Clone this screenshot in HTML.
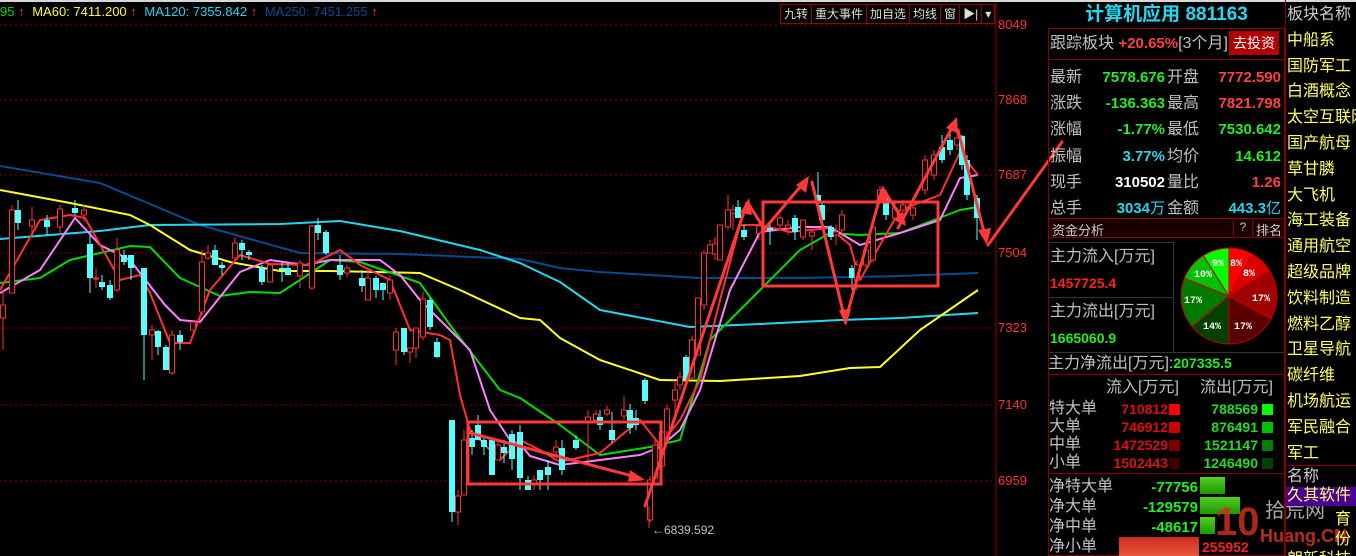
<!DOCTYPE html>
<html><head><meta charset="utf-8"><style>
*{margin:0;padding:0;box-sizing:border-box}
html,body{width:1356px;height:556px;overflow:hidden}
body{background:#000;position:relative;font-family:"Liberation Sans","Noto Sans CJK SC",sans-serif;color:#c0c0c0}
.a{position:absolute;white-space:nowrap}
.cn{font-family:"Liberation Sans","Noto Sans CJK SC",sans-serif;font-size:16px;line-height:18px}
.num{font-family:"Liberation Sans",sans-serif;font-weight:bold;font-size:15px;line-height:18px}
</style></head><body>
<div class="a" style="left:0;top:0;width:1356px;height:2px;background:#d8d8d8"></div>
<svg class="a" style="left:0;top:0" width="1356" height="556" xmlns="http://www.w3.org/2000/svg">
<g stroke="#8a0000" stroke-dasharray="2,3" stroke-width="1">
<line x1="0" y1="25" x2="995" y2="25"/><line x1="0" y1="100" x2="995" y2="100"/><line x1="0" y1="175" x2="995" y2="175"/><line x1="0" y1="253" x2="995" y2="253"/><line x1="0" y1="328" x2="995" y2="328"/><line x1="0" y1="405" x2="995" y2="405"/><line x1="0" y1="481" x2="995" y2="481"/>
</g>
<line x1="996" y1="2" x2="996" y2="556" stroke="#a00000"/>
<g fill="none" stroke-width="2" stroke-linejoin="round">
<polyline stroke="#0a4a90" points="0,166 100,183 200,225 300,253 400,254 520,259 560,268 600,272 700,278 800,278 900,276 978,273"/>
<polyline stroke="#22d8f0" points="0,239 100,231 150,225 280,224 340,221 400,231 480,250 520,263 560,282 600,310 690,327 760,324 840,320 900,318 978,313"/>
<polyline stroke="#ffff22" points="0,190 70,203 130,215 150,225 190,250 230,262 280,271 330,271 420,273 460,290 520,318 540,320 560,338 600,360 660,380 720,381 800,376 850,368 880,367 920,330 978,290"/>
<polyline stroke="#00dd00" points="0,283 40,278 70,260 100,253 130,246 150,247 180,278 220,296 250,292 280,293 300,280 330,260 360,262 420,283 450,325 500,390 520,398 560,425 600,455 650,447 680,440 710,340 760,290 800,250 830,233 860,235 900,233 960,210 978,207"/>
<polyline stroke="#ff80ff" points="0,293 40,270 75,218 100,245 130,260 165,305 180,320 200,322 240,272 270,260 305,265 330,260 380,260 400,275 420,300 445,325 470,350 490,410 510,440 520,444 530,456 560,465 600,460 640,455 660,447 680,430 700,390 730,290 760,232 800,227 830,227 860,245 900,233 940,220 960,178 978,175"/>
<polyline stroke="#ff3030" points="0,290 40,220 70,215 85,218 120,280 140,275 150,293 170,343 190,343 210,290 240,255 270,264 310,265 340,250 360,265 390,280 410,330 440,335 450,340 460,395 470,430 480,440 500,460 520,440 540,450 560,462 600,453 640,420 660,445 680,420 700,380 720,300 740,225 760,225 790,232 830,228 850,245 860,280 880,245 900,210 940,195 960,152 978,175"/>
</g>
<g id="cd"></g>
<g stroke="#ff3838" fill="none" stroke-width="3">
<rect x="468" y="422" width="193" height="62"/>
<rect x="763" y="202" width="175" height="84"/>
</g>
<g stroke="#ff3838" fill="none" stroke-width="3" stroke-linecap="round">
<line x1="470" y1="433" x2="640" y2="478"/>
<line x1="645" y1="506" x2="747" y2="203"/>
<polyline points="748,203 765,230"/>
<line x1="762" y1="232" x2="806" y2="180"/>
<line x1="812" y1="182" x2="845" y2="320"/>
<line x1="845" y1="322" x2="882" y2="190"/>
<line x1="884" y1="190" x2="904" y2="222"/>
<line x1="898" y1="228" x2="955" y2="122"/>
<line x1="958" y1="130" x2="986" y2="240"/>
<line x1="988" y1="245" x2="1062" y2="142"/>
</g>
<g fill="#ff3838">
<polygon points="645,480 630,470 628,482"/>
<polygon points="749,198 740,213 752,215"/>
<polygon points="809,176 796,185 806,193"/>
<polygon points="846,326 839,310 851,309"/>
<polygon points="883,185 876,201 888,201"/>
<polygon points="906,226 894,220 902,212"/>
<polygon points="957,117 946,128 957,133"/>
<polygon points="987,245 978,230 991,228"/>
</g>
<line x1="649" y1="506" x2="649" y2="528" stroke="#ff3030"/>
<text x="652" y="534" fill="#c0c0c0" font-family="Liberation Sans" font-size="12">←6839.592</text>
<g fill="#ff3030" font-family="Liberation Sans" font-size="13">
<text x="998" y="29">8049</text><text x="998" y="104">7868</text><text x="998" y="179">7687</text><text x="998" y="257">7504</text><text x="998" y="332">7323</text><text x="998" y="409">7140</text><text x="998" y="485">6959</text>
</g>
<g stroke="#c00000" stroke-width="1">
<path d="M1229,296 L1229,248 A48,48 0 0 1 1252.1,253.9Z" fill="#ff0000"/>
<path d="M1229,296 L1252.1,253.9 A48,48 0 0 1 1269.5,270.3Z" fill="#dd0000"/>
<path d="M1229,296 L1269.5,270.3 A48,48 0 0 1 1271,319.1Z" fill="#a00000"/>
<path d="M1229,296 L1271,319.1 A48,48 0 0 1 1229,344Z" fill="#5a0000"/>
<path d="M1229,296 L1229,344 A48,48 0 0 1 1192,326.6Z" fill="#004000"/>
<path d="M1229,296 L1192,326.6 A48,48 0 0 1 1184.4,278.3Z" fill="#007a00"/>
<path d="M1229,296 L1184.4,278.3 A48,48 0 0 1 1203.3,255.5Z" fill="#00c000"/>
<path d="M1229,296 L1203.3,255.5 A48,48 0 0 1 1229,248Z" fill="#00ff00"/>
</g>
<g fill="#fff" font-family="Liberation Mono" font-size="10" font-weight="bold">
<text x="1230" y="266">8%</text><text x="1243" y="276">8%</text><text x="1252" y="301">17%</text><text x="1234" y="329">17%</text><text x="1203" y="329">14%</text><text x="1184" y="303">17%</text><text x="1194" y="277">10%</text><text x="1212" y="266">9%</text>
</g>
</svg>

<div class="a" style="left:0;top:4px;font-size:13px;font-family:'Liberation Sans',sans-serif;line-height:15px">
<span style="color:#00dd00">95</span> <span style="color:#ff3030">↑</span>
<span style="color:#ffff22;margin-left:4px">MA60: 7411.200</span> <span style="color:#ff3030">↑</span>
<span style="color:#22d8f0;margin-left:4px">MA120: 7355.842</span> <span style="color:#ff3030">↑</span>
<span style="color:#0a4a90;margin-left:4px">MA250: 7451.255</span> <span style="color:#ff3030">↑</span></div>
<div class="a" style="left:780px;top:4px;height:20px;border:1px solid #a00000;display:flex;font-size:12px;color:#ddd;line-height:18px">
<span style="padding:0 3px;border-right:1px solid #a00000">九转</span><span style="padding:0 3px;border-right:1px solid #a00000">重大事件</span><span style="padding:0 3px;border-right:1px solid #a00000">加自选</span><span style="padding:0 3px;border-right:1px solid #a00000">均线</span><span style="padding:0 3px;border-right:1px solid #a00000">窗</span><span style="padding:0 3px;border-right:1px solid #a00000">▶|</span><span style="padding:0 3px">▾</span></div>

<div class="a" style="left:1048px;top:3px;width:237px;text-align:center;color:#22d8f0;font-weight:bold;font-size:19px;line-height:24px">计算机应用 881163</div>
<div class="a" style="left:1048px;top:28px;width:237px;height:528px;border:1px solid #8a0000"></div>
<div class="a cn" style="left:1050px;top:35px">跟踪板块 <span class="num" style="color:#ff4040">+20.65%</span>[3个月]</div>
<div class="a" style="left:1229px;top:31px;width:50px;height:24px;background:#b00000;color:#fff;font-size:14px;line-height:24px;text-align:center">去投资</div>
<div class="a" style="left:1048px;top:59px;width:237px;border-top:1px solid #8a0000"></div>
<div class="a cn" style="left:1050px;top:65px;line-height:26.2px">最新<br>涨跌<br>涨幅<br>振幅<br>现手<br>总手</div>
<div class="a num" style="left:1090px;top:65px;width:75px;text-align:right;line-height:26.2px"><span style="color:#22ee22">7578.676</span><br><span style="color:#22ee22">-136.363</span><br><span style="color:#22ee22">-1.77%</span><br><span style="color:#22d8f0">3.77%</span><br><span style="color:#fff">310502</span><br><span style="color:#22d8f0">3034<span style="font-weight:normal">万</span></span></div>
<div class="a cn" style="left:1167px;top:65px;line-height:26.2px">开盘<br>最高<br>最低<br>均价<br>量比<br>金额</div>
<div class="a num" style="left:1200px;top:65px;width:81px;text-align:right;line-height:26.2px"><span style="color:#ff4040">7772.590</span><br><span style="color:#ff4040">7821.798</span><br><span style="color:#22ee22">7530.642</span><br><span style="color:#22ee22">14.612</span><br><span style="color:#ff4040">1.26</span><br><span style="color:#22d8f0">443.3<span style="font-weight:normal">亿</span></span></div>
<div class="a" style="left:1049px;top:218px;width:235px;height:20px;background:#1a0000;border-top:1px solid #8a0000;border-bottom:1px solid #8a0000"></div>
<div class="a" style="left:1052px;top:220px;font-size:13px;color:#ccc">资金分析</div>
<div class="a" style="left:1233px;top:218px;width:20px;height:20px;border-left:1px solid #8a0000;border-right:1px solid #8a0000;font-size:12px;text-align:center;line-height:19px">?</div>
<div class="a" style="left:1256px;top:220px;font-size:13px;color:#ccc">排名</div>
<div class="a" style="left:1049px;top:242px;width:125px;height:110px;border-top:1px solid #333;border-right:1px solid #333"></div>
<div class="a" style="left:1049px;top:297px;width:125px;border-top:1px solid #333"></div>
<div class="a cn" style="left:1050px;top:248px">主力流入[万元]</div>
<div class="a num" style="left:1050px;top:274px;color:#ff2020;font-size:14px">1457725.4</div>
<div class="a cn" style="left:1050px;top:303px">主力流出[万元]</div>
<div class="a num" style="left:1050px;top:329px;color:#22ee22;font-size:14px">1665060.9</div>
<div class="a" style="left:1049px;top:352px;width:235px;border-top:1px solid #333"></div>
<div class="a cn" style="left:1048px;top:354px">主力净流出[万元]:<span class="num" style="color:#22ee22;font-size:14px">207335.5</span></div>
<div class="a" style="left:1049px;top:374px;width:235px;border-top:1px solid #8a0000"></div>
<div class="a cn" style="left:1106px;top:379px">流入[万元]</div>
<div class="a cn" style="left:1200px;top:379px">流出[万元]</div>
<div class="a cn" style="left:1049px;top:400px;line-height:18px">特大单<br>大单<br>中单<br>小单</div>
<div class="a num" style="left:1098px;top:400px;width:70px;text-align:right;color:#dd1010;font-size:14px;line-height:18px">710812<br>746912<br>1472529<br>1502443</div>
<div class="a" style="left:1169px;top:404px;width:11px;height:11px;background:#ff0000"></div>
<div class="a" style="left:1169px;top:422px;width:11px;height:11px;background:#cc0000"></div>
<div class="a" style="left:1169px;top:440px;width:11px;height:11px;background:#7a0000"></div>
<div class="a" style="left:1169px;top:458px;width:11px;height:11px;background:#3a0000"></div>
<div class="a num" style="left:1188px;top:400px;width:70px;text-align:right;color:#22dd22;font-size:14px;line-height:18px">788569<br>876491<br>1521147<br>1246490</div>
<div class="a" style="left:1262px;top:404px;width:11px;height:11px;background:#00ff00"></div>
<div class="a" style="left:1262px;top:422px;width:11px;height:11px;background:#00c000"></div>
<div class="a" style="left:1262px;top:440px;width:11px;height:11px;background:#008000"></div>
<div class="a" style="left:1262px;top:458px;width:11px;height:11px;background:#004000"></div>
<div class="a" style="left:1049px;top:473px;width:235px;border-top:1px solid #8a0000"></div>
<div class="a cn" style="left:1049px;top:477px;line-height:20px">净特大单<br>净大单<br>净中单<br>净小单</div>
<div class="a num" style="left:1120px;top:478px;width:78px;text-align:right;color:#22ee22;font-size:15px;line-height:20px">-77756<br>-129579<br>-48617</div>
<div class="a" style="left:1200px;top:477px;width:25px;height:17px;background:linear-gradient(#55cc22,#1a9a00)"></div>
<div class="a" style="left:1200px;top:497px;width:40px;height:17px;background:linear-gradient(#55cc22,#1a9a00)"></div>
<div class="a" style="left:1200px;top:517px;width:15px;height:17px;background:linear-gradient(#55cc22,#1a9a00)"></div>
<div class="a" style="left:1119px;top:537px;width:80px;height:19px;background:linear-gradient(#cc2a20,#e85a3a)"></div>
<div class="a num" style="left:1202px;top:538px;color:#ff2020;font-size:14px">255952</div>
<div class="a" style="left:1215px;top:500px;font-size:40px;font-weight:bold;color:#c83020;font-family:'Liberation Sans';line-height:44px;opacity:.85">10</div>
<div class="a" style="left:1265px;top:500px;font-size:20px;color:#bbb;line-height:22px;opacity:.9">拾荒网</div>
<div class="a" style="left:1260px;top:526px;font-size:18px;font-weight:bold;color:#d03020;line-height:20px;opacity:.9">Huang.CN</div>
<div class="a" style="left:1285px;top:0;width:71px;height:556px;border-left:1px solid #8a0000"></div>
<div class="a cn" style="left:1287px;top:2px;line-height:25.8px;color:#ffff66"><span style="color:#ccc">板块名称</span><br>中船系<br>国防军工<br>白酒概念<br>太空互联网<br>国产航母<br>草甘膦<br>大飞机<br>海工装备<br>通用航空<br>超级品牌<br>饮料制造<br>燃料乙醇<br>卫星导航<br>碳纤维<br>机场航运<br>军民融合<br>军工</div>
<div class="a" style="left:1285px;top:465px;width:71px;border-top:1px solid #8a0000"></div>
<div class="a cn" style="left:1287px;top:468px;color:#ccc">名称</div>
<div class="a cn" style="left:1286px;top:487px;width:70px;height:19px;background:#4a0090;color:#ffff66;padding-left:1px">久其软件</div>
<div class="a cn" style="left:1287px;top:510px;color:#ffff66;line-height:20px">　　　育<br>　　　份<br>朗新科技</div>
<script>
var d=[[3,305,318,290,350,'r'],[12,210,293,205,293,'r'],[18,210,223,200,230,'c'],[32,220,226,207,233,'r'],[47,220,227,215,235,'c'],[60,209,227,205,235,'r'],[75,208,213,200,215,'c'],[84,210,215,205,222,'r'],[90,244,278,235,293,'c'],[96,278,279,268,288,'r'],[102,282,287,275,290,'c'],[110,285,298,280,300,'c'],[117,250,290,238,292,'r'],[124,255,262,250,265,'c'],[131,255,268,255,280,'c'],[144,268,335,268,380,'c'],[152,330,335,325,360,'r'],[158,331,347,330,355,'c'],[166,347,370,345,370,'c'],[172,335,373,330,375,'r'],[180,335,342,330,350,'c'],[193,322,330,322,330,'r'],[202,262,312,250,315,'r'],[208,253,258,245,260,'r'],[215,250,265,245,265,'c'],[222,265,268,262,275,'c'],[235,243,258,237,260,'r'],[242,243,250,240,260,'c'],[249,252,255,250,260,'c'],[262,267,282,265,285,'c'],[270,265,282,265,282,'r'],[282,268,270,262,282,'c'],[288,268,275,262,275,'c'],[300,263,276,260,288,'r'],[312,226,288,225,290,'r'],[318,225,233,218,240,'c'],[326,232,253,230,255,'c'],[340,265,275,255,280,'c'],[347,268,273,265,277,'r'],[362,278,286,270,292,'c'],[368,278,300,270,300,'r'],[376,278,290,276,298,'c'],[383,283,290,283,300,'c'],[390,280,293,275,300,'r'],[396,332,350,328,365,'r'],[404,328,352,330,355,'c'],[410,348,352,348,363,'r'],[416,328,348,330,358,'r'],[423,299,337,292,340,'r'],[430,300,327,298,330,'c'],[437,342,357,338,358,'c'],
[452,420,512,420,522,'c'],[458,496,512,490,525,'r'],[464,440,495,430,495,'r'],[472,438,447,430,455,'c'],[478,425,440,415,440,'c'],[484,440,447,436,455,'c'],[492,440,475,440,475,'c'],[498,445,460,440,460,'r'],[504,447,453,440,463,'c'],[512,434,459,430,470,'c'],[520,432,478,425,490,'c'],[528,480,490,476,490,'c'],[534,480,485,475,490,'r'],[540,470,480,470,490,'c'],[548,467,475,460,490,'c'],[556,447,452,440,455,'r'],[562,448,470,440,475,'c'],[576,440,448,435,450,'c'],[588,417,423,410,460,'r'],[596,414,420,410,420,'r'],[600,417,425,410,430,'c'],
[612,430,440,412,443,'c'],[624,410,416,396,420,'r'],[630,410,428,404,434,'c'],[607,410,414,406,416,'r'],[636,418,425,410,430,'c'],[645,380,401,378,404,'c'],[650,480,520,476,522,'r'],[655,445,478,440,480,'r'],[662,432,466,424,480,'r'],[667,409,432,405,440,'r'],[675,390,400,382,415,'r'],[680,377,385,372,390,'r'],[686,357,380,355,385,'c'],[692,340,378,336,380,'r'],[698,298,355,298,355,'r'],[704,253,305,250,310,'r'],[710,245,253,240,253,'r'],[715,244,254,237,260,'r'],[720,225,260,230,260,'r'],[728,210,227,195,230,'r'],[733,210,213,205,230,'r'],[738,207,218,200,212,'c'],[744,230,237,225,240,'c'],[759,226,233,222,240,'r'],[770,228,230,222,245,'c'],[780,218,225,215,230,'r'],[788,225,228,220,235,'r'],[795,218,232,215,240,'c'],[803,220,237,220,240,'r'],[812,232,236,230,250,'r'],[818,195,201,172,205,'c'],[822,205,220,203,221,'c'],[831,227,237,225,240,'c'],[836,232,235,225,245,'r'],[842,215,230,210,240,'r'],[852,268,278,265,290,'c'],[857,265,280,260,290,'r'],[866,250,265,245,270,'r'],[873,227,260,220,262,'r'],[880,190,197,186,200,'r'],[886,195,215,190,220,'c'],[895,208,218,200,220,'r'],[903,205,210,200,215,'r'],[913,208,215,205,220,'r'],[925,160,190,155,195,'r'],[934,155,175,150,180,'r'],[942,147,160,135,163,'c'],[950,140,150,125,155,'c'],[957,138,145,122,150,'r'],[962,136,165,135,170,'c'],[967,160,195,155,200,'c'],[977,198,218,195,240,'c']];
var s='';d.forEach(function(c){var col=c[5]=='r'?'#ff3030':'#55ffff';var h=Math.max(1,c[2]-c[1]);
s+='<line x1="'+c[0]+'" y1="'+c[3]+'" x2="'+c[0]+'" y2="'+c[4]+'" stroke="'+col+'"/>';
s+=c[5]=='r'?'<rect x="'+(c[0]-2.5)+'" y="'+c[1]+'" width="5" height="'+h+'" fill="#000" stroke="'+col+'"/>':'<rect x="'+(c[0]-3)+'" y="'+c[1]+'" width="6" height="'+h+'" fill="'+col+'"/>';});
document.getElementById('cd').innerHTML=s;
</script>
</body></html>
